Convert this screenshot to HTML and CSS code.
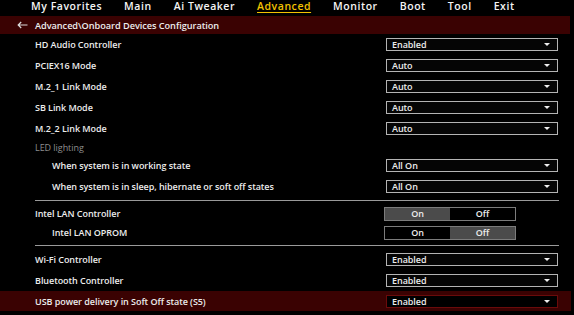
FILE: index.html
```html
<!DOCTYPE html>
<html lang="en">
<head>
  <meta charset="UTF-8" />
  <title>Advanced\Onboard Devices Configuration</title>
  <link rel="stylesheet" href="styles.css">
</head>
<body>

<nav class="menu">
  <span class="menu-item">My Favorites</span>
  <span class="menu-item">Main</span>
  <span class="menu-item">Ai Tweaker</span>
  <span class="menu-item active">Advanced</span>
  <span class="menu-item">Monitor</span>
  <span class="menu-item">Boot</span>
  <span class="menu-item">Tool</span>
  <span class="menu-item">Exit</span>
</nav>

<div class="crumb">
  <svg class="back" width="11" height="8" viewBox="0 0 11 8">
    <path d="M10.5 4H1.2M4.2 1L1.2 4l3 3" fill="none" stroke="#dcdcdc" stroke-width="1.2"/>
  </svg>
  <span>Advanced\Onboard Devices Configuration</span>
</div>

<div class="settings">
  <div class="row">
    <span class="label">HD Audio Controller</span>
    <div class="select"><span>Enabled</span><i class="caret"></i></div>
  </div>
  <div class="row">
    <span class="label">PCIEX16 Mode</span>
    <div class="select"><span>Auto</span><i class="caret"></i></div>
  </div>
  <div class="row">
    <span class="label">M.2_1 Link Mode</span>
    <div class="select"><span>Auto</span><i class="caret"></i></div>
  </div>
  <div class="row">
    <span class="label">SB Link Mode</span>
    <div class="select"><span>Auto</span><i class="caret"></i></div>
  </div>
  <div class="row">
    <span class="label">M.2_2 Link Mode</span>
    <div class="select"><span>Auto</span><i class="caret"></i></div>
  </div>

  <div class="group-title">LED lighting</div>
  <div class="row sub">
    <span class="label">When system is in working state</span>
    <div class="select"><span>All On</span><i class="caret"></i></div>
  </div>
  <div class="row sub">
    <span class="label">When system is in sleep, hibernate or soft off states</span>
    <div class="select"><span>All On</span><i class="caret"></i></div>
  </div>

  <hr class="divider">

  <div class="row tight">
    <span class="label">Intel LAN Controller</span>
    <div class="toggle"><span class="on">On</span><span>Off</span></div>
  </div>
  <div class="row tight sub">
    <span class="label">Intel LAN OPROM</span>
    <div class="toggle"><span>On</span><span class="on">Off</span></div>
  </div>

  <hr class="divider">

  <div class="row">
    <span class="label">Wi-Fi Controller</span>
    <div class="select"><span>Enabled</span><i class="caret"></i></div>
  </div>
  <div class="row">
    <span class="label">Bluetooth Controller</span>
    <div class="select"><span>Enabled</span><i class="caret"></i></div>
  </div>
  <div class="row selected">
    <span class="label">USB power delivery in Soft Off state (S5)</span>
    <div class="select"><span>Enabled</span><i class="caret"></i></div>
  </div>
</div>

</body>
</html>
```

FILE: styles.css
```css
:root {
  --bg: #000;
  --text: #ececec;
  --muted: #8e8e8e;
  --accent: #f2c200;
  --maroon: #3a0202;
  --line: #9a9a9a;
}

* {
  box-sizing: border-box;
  margin: 0;
  padding: 0;
}

body {
  background: var(--bg);
  color: var(--text);
  font-family: 'Open Sans', 'Noto Sans', sans-serif;
  font-weight: 600;
  font-size: 9px;
  letter-spacing: -0.05px;
  width: 574px;
  height: 315px;
  overflow: hidden;
}

/* top menu */
.menu {
  display: flex;
  gap: 22px;
  height: 16px;
  padding-left: 31px;
}

.menu-item {
  font-size: 10.5px;
  color: #f4f4f4;
  line-height: 13px;
  letter-spacing: 0.55px;
}

.menu-item.active {
  color: var(--accent);
  text-decoration: underline;
  text-underline-offset: 2px;
}

/* breadcrumb */
.crumb {
  display: flex;
  align-items: center;
  height: 18px;
  margin-right: 4px;
  background: var(--maroon);
  font-size: 9.2px;
}

.crumb .back {
  margin: 0 7px 0 17px;
}

/* settings list */
.settings {
  padding-left: 35px;
}

.row {
  display: flex;
  align-items: center;
  height: 21px;
}

.row.tight {
  height: 19px;
}

.label {
  flex: 1;
}

.sub .label {
  padding-left: 17px;
}

.group-title {
  height: 16px;
  line-height: 17px;
  color: var(--muted);
  font-weight: 400;
}

.select {
  display: flex;
  align-items: center;
  justify-content: space-between;
  width: 172px;
  height: 13px;
  margin-right: 16px;
  padding: 0 7px 0 5px;
  border: 1px solid #b4b4b4;
  background: #050505;
}

.caret {
  width: 0;
  height: 0;
  border-left: 3px solid transparent;
  border-right: 3px solid transparent;
  border-top: 3px solid #eee;
}

.toggle {
  display: flex;
  width: 132px;
  height: 14px;
  margin-right: 58px;
  border: 1px solid #7c7c7c;
}

.toggle span {
  flex: 1;
  text-align: center;
  line-height: 12px;
}

.toggle .on {
  background: #4b4b4b;
}

.divider {
  border: none;
  border-top: 1px solid var(--line);
  width: 524px;
  margin: 3px 0;
}

.selected {
  background: var(--maroon);
  margin-left: -35px;
  padding-left: 35px;
  margin-right: 3px;
  height: 20px;
}

.selected .select {
  border-color: #6a0b0b;
  background: #000;
  margin-right: 13px;
}
```
